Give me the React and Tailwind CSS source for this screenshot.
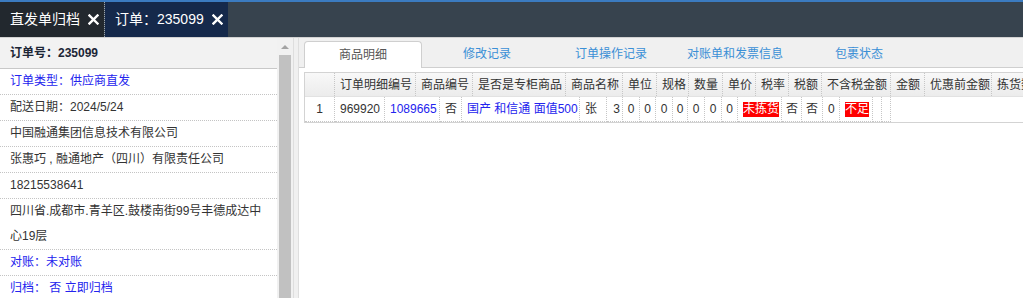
import React from "react";

const font = { fontFamily: '"Liberation Sans", "Noto Sans CJK SC", sans-serif' };

function XIcon() {
  return (
    <svg width="11" height="11" viewBox="0 0 11 11" className="ml-[8px]">
      <path d="M1.5 1.5 L9.5 9.5 M9.5 1.5 L1.5 9.5" stroke="#ffffff" strokeWidth="2.4" strokeLinecap="square" />
    </svg>
  );
}

const leftRows = [
  { t: "订单类型：供应商直发", blue: true },
  { t: "配送日期：2024/5/24" },
  { t: "中国融通集团信息技术有限公司" },
  { t: "张惠巧 , 融通地产（四川）有限责任公司" },
  { t: "18215538641" },
  { t: "四川省.成都市.青羊区.鼓楼南街99号丰德成达中心19层" },
  { t: "对账：未对账", blue: true },
  { t: "归档：  否 立即归档", blue: true },
];

const headers = [
  ["", 30],
  ["订单明细编号", 81],
  ["商品编号", 57],
  ["是否是专柜商品", 93],
  ["商品名称", 57],
  ["单位", 34],
  ["规格", 32],
  ["数量", 34],
  ["单价", 33],
  ["税率", 33],
  ["税额", 33],
  ["不含税金额", 69],
  ["金额", 34],
  ["优惠前金额", 67],
  ["拣货数量", 60],
  ["状态", 50],
];

const cells = [
  { t: "1", w: 30, c: "justify-center" },
  { t: "969920", w: 50 },
  { t: "1089665", w: 55, blue: true },
  { t: "否", w: 22 },
  { t: "国产 和信通 面值500", w: 118, blue: true },
  { t: "张", w: 27 },
  { t: "3", w: 16, c: "justify-end pr-[2px] pl-0" },
  { t: "0", w: 17, c: "justify-center px-0" },
  { t: "0", w: 16, c: "justify-center px-0" },
  { t: "0", w: 17, c: "justify-center px-0" },
  { t: "0", w: 15, c: "justify-center px-0" },
  { t: "0", w: 17, c: "justify-center px-0" },
  { t: "0", w: 17, c: "justify-center px-0" },
  { t: "0", w: 16, c: "justify-center px-0" },
  { t: "未拣货", w: 44, badge: true },
  { t: "否", w: 20, c: "pl-[4px]" },
  { t: "否", w: 21, c: "pl-[4px]" },
  { t: "0", w: 17 },
  { t: "不足", w: 33, badge: true },
  { t: "", w: 9 },
  { t: "", w: 9 },
];

export default function App() {
  return (
    <div className="w-[1023px] h-[298px] overflow-hidden bg-[#f0f0f0] flex flex-col text-[12px] text-[#333]" style={font}>
      {/* top bar */}
      <div className="h-[2px] bg-[#3b7bc0] shrink-0" />
      <div className="h-[35px] bg-[#37434e] flex shrink-0">
        <div className="w-[104px] bg-[#22282e] flex items-center pl-[10px] text-white text-[14px]">
          <span>直发单归档</span>
          <XIcon />
        </div>
        <div className="w-px border-l border-dotted border-[#9aa3ad]" />
        <div className="w-[123px] bg-[#15294b] flex items-center pl-[10px] text-white text-[14px]">
          <span>订单：235099</span>
          <XIcon />
        </div>
      </div>
      <div className="h-px bg-[#d2d2d2] shrink-0" />

      <div className="flex flex-1 min-h-0">
        {/* left panel */}
        <div className="w-[277px] bg-white flex flex-col shrink-0">
          <div className="h-[31px] bg-[#f2f2f2] border-b border-[#c8c8c8] flex items-center pl-[10px] font-bold text-[#1c2636] shrink-0">
            订单号：235099
          </div>
          {leftRows.map((r, i) => (
            <div
              key={i}
              className={`border-b border-dotted border-[#c4c4c4] pl-[10px] pr-[8px] leading-[25px] shrink-0 ${r.blue ? "text-[#2323ee]" : "text-[#333]"}`}
            >
              {r.t}
            </div>
          ))}
        </div>

        {/* scrollbar */}
        <div className="w-[16px] bg-[#f1f1f1] flex flex-col items-center shrink-0">
          <div className="h-[17px] flex items-center justify-center">
            <div className="w-0 h-0 border-l-[4px] border-r-[4px] border-b-[4px] border-l-transparent border-r-transparent border-b-[#a3a3a3]" />
          </div>
          <div className="w-[12px] flex-1 bg-[#c1c1c1]" />
        </div>

        {/* splitter */}
        <div className="w-[6px] bg-[#f0f0f0] border-l border-r border-[#dedede] shrink-0" />

        {/* right panel */}
        <div className="flex-1 min-w-0 overflow-hidden flex flex-col bg-white">
          {/* tabs */}
          <div className="h-[30px] bg-[#f0f0f0] border-b border-[#cfcfcf] flex items-end pl-[5px] gap-[6px] shrink-0">
            <div className="w-[118px] h-[27px] -mb-px bg-white border border-b-0 border-[#cfcfcf] rounded-t-[4px] flex items-center justify-center text-[#555]">
              商品明细
            </div>
            {["修改记录", "订单操作记录", "对账单和发票信息", "包裹状态"].map((t) => (
              <div key={t} className="w-[118px] h-[27px] flex items-center justify-center text-[#3a8fd6] shrink-0">
                {t}
              </div>
            ))}
          </div>

          {/* table */}
          <div className="ml-[5px] mt-[4px] w-[900px] border-t border-l border-b border-[#d3d3d3] shrink-0">
            <div className="flex h-[24px] bg-gradient-to-b from-[#f8f8f8] to-[#ececec] border-b border-[#e2e2e2]">
              {headers.map(([t, w], i) => (
                <div
                  key={i}
                  style={{ width: w }}
                  className="shrink-0 h-full flex items-center pl-[5px] whitespace-nowrap overflow-hidden border-r border-dotted border-[#c6c6c6] text-[#333]"
                >
                  {t}
                </div>
              ))}
            </div>
            <div className="flex h-[25px] bg-white">
              {cells.map((c, i) => (
                <div
                  key={i}
                  style={{ width: c.w }}
                  className={`shrink-0 h-full flex items-center whitespace-nowrap overflow-hidden border-r border-b border-dotted border-[#c6c6c6] ${c.c ? c.c : "pl-[5px]"} ${c.blue ? "text-[#2323ee]" : "text-[#333]"} ${c.badge ? "pl-[3px]" : ""}`}
                >
                  {c.badge ? (
                    <span className="bg-[#ff0000] text-white leading-[15px]">{c.t}</span>
                  ) : (
                    c.t
                  )}
                </div>
              ))}
            </div>
          </div>
        </div>
      </div>
    </div>
  );
}
